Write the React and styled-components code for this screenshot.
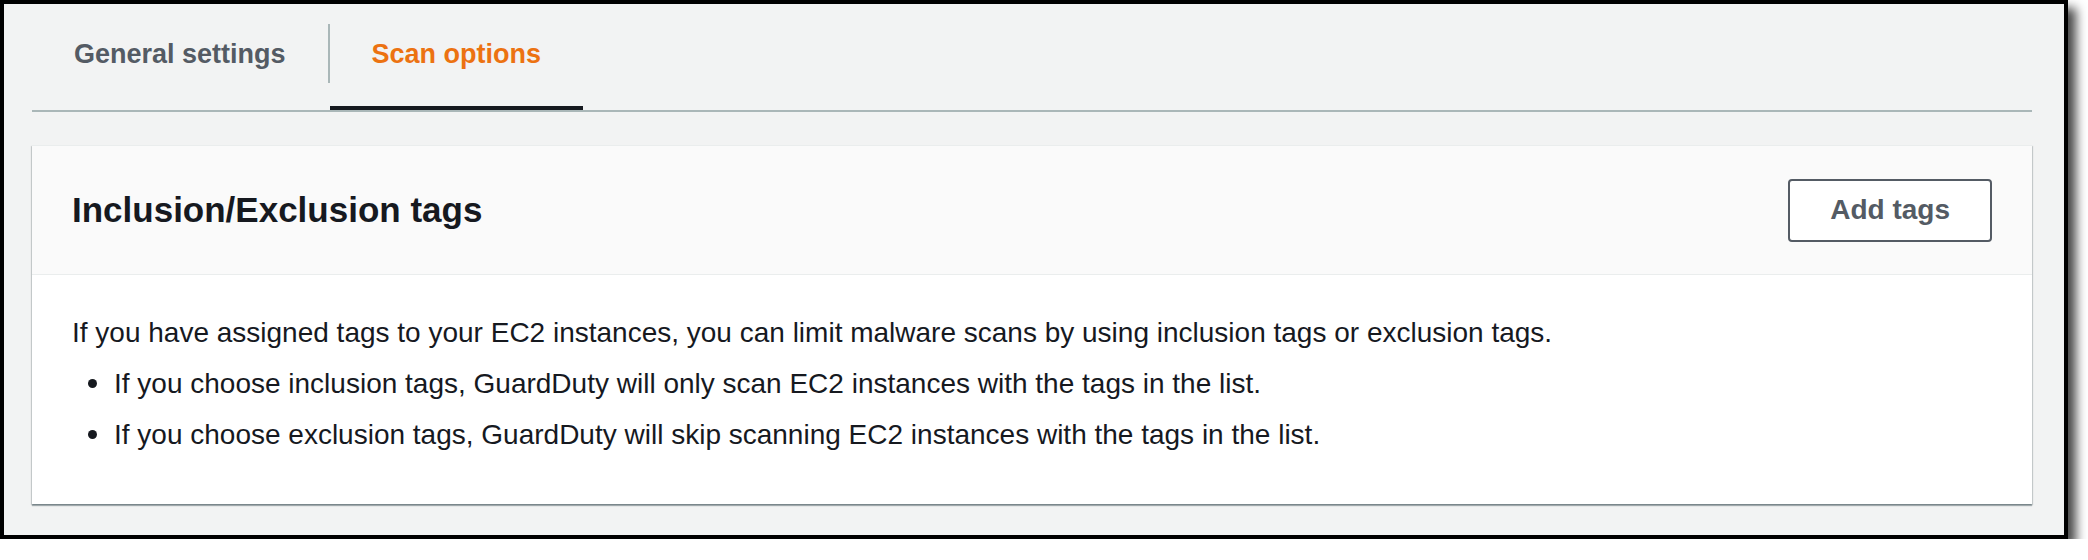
import React from 'react'
import styled, { createGlobalStyle } from 'styled-components'

const GlobalStyle = createGlobalStyle`
  body {
    margin: 0;
    background: #ffffff;
    font-family: "Liberation Sans", Arial, sans-serif;
  }
`;

const Frame = styled.div`
  width: 2068px;
  height: 539px;
  box-sizing: border-box;
  border: 4px solid #000;
  background: #f2f3f3;
  box-shadow: 8px 8px 10px rgba(0, 0, 0, 0.72);
  padding: 0 32px 0 28px;
  display: flex;
  flex-direction: column;
`;

const TabList = styled.div`
  display: flex;
  align-items: flex-start;
  border-bottom: 2px solid #aab7b8;
`;

const Tab = styled.div`
  height: 106px;
  box-sizing: border-box;
  padding: 0 42px 1px;
  display: flex;
  align-items: center;
  border-bottom: 4px solid ${props => props.$active ? '#16191f' : 'transparent'};
  font-size: 27px;
  font-weight: 700;
  color: ${props => props.$active ? '#ec7211' : '#545b64'};
  cursor: pointer;
`;

const TabDivider = styled.div`
  width: 2px;
  height: 59px;
  margin-top: 20px;
  background: #aab7b8;
`;

const Card = styled.section`
  margin-top: 33px;
  background: #ffffff;
  border-top: 1px solid #eaeded;
  box-shadow: 0 2px 1px 0 rgba(0, 28, 36, 0.3),
    1px 1px 1px 0 rgba(0, 28, 36, 0.15),
    -1px 1px 1px 0 rgba(0, 28, 36, 0.15);
`;

const CardHeader = styled.div`
  height: 129px;
  box-sizing: border-box;
  padding: 0 40px;
  display: flex;
  align-items: center;
  justify-content: space-between;
  background: #fafafa;
  border-bottom: 1px solid #eaeded;
`;

const Title = styled.h2`
  margin: 0;
  font-size: 35px;
  font-weight: 700;
  color: #16191f;
`;

const Button = styled.button`
  height: 63px;
  box-sizing: border-box;
  padding: 0 40px;
  border: 2px solid #545b64;
  border-radius: 4px;
  background: #ffffff;
  font-family: inherit;
  font-size: 28px;
  font-weight: 700;
  color: #545b64;
  cursor: pointer;
`;

const CardBody = styled.div`
  padding: 32px 40px 44px;
  font-size: 28px;
  line-height: 51px;
  color: #16191f;
`;

const Text = styled.p`
  margin: 0;
`;

const List = styled.ul`
  margin: 0;
  padding: 0;
  list-style: none;
`;

const Item = styled.li`
  display: flex;
  align-items: center;
`;

const Dot = styled.span`
  width: 9px;
  height: 9px;
  border-radius: 50%;
  background: #16191f;
  margin: 0 17px 0 16px;
  flex-shrink: 0;
`;

const bullets = [
  'If you choose inclusion tags, GuardDuty will only scan EC2 instances with the tags in the list.',
  'If you choose exclusion tags, GuardDuty will skip scanning EC2 instances with the tags in the list.',
];

const App = () => {
  return (
    <>
      <GlobalStyle />
      <Frame>
        <TabList>
          <Tab>General settings</Tab>
          <TabDivider />
          <Tab $active>Scan options</Tab>
        </TabList>

        <Card>
          <CardHeader>
            <Title>Inclusion/Exclusion tags</Title>
            <Button>Add tags</Button>
          </CardHeader>
          <CardBody>
            <Text>
              If you have assigned tags to your EC2 instances, you can limit malware scans by using inclusion tags or exclusion tags.
            </Text>
            <List>
              {bullets.map(b => (
                <Item key={b}>
                  <Dot />
                  {b}
                </Item>
              ))}
            </List>
          </CardBody>
        </Card>
      </Frame>
    </>
  )
}

export default App
